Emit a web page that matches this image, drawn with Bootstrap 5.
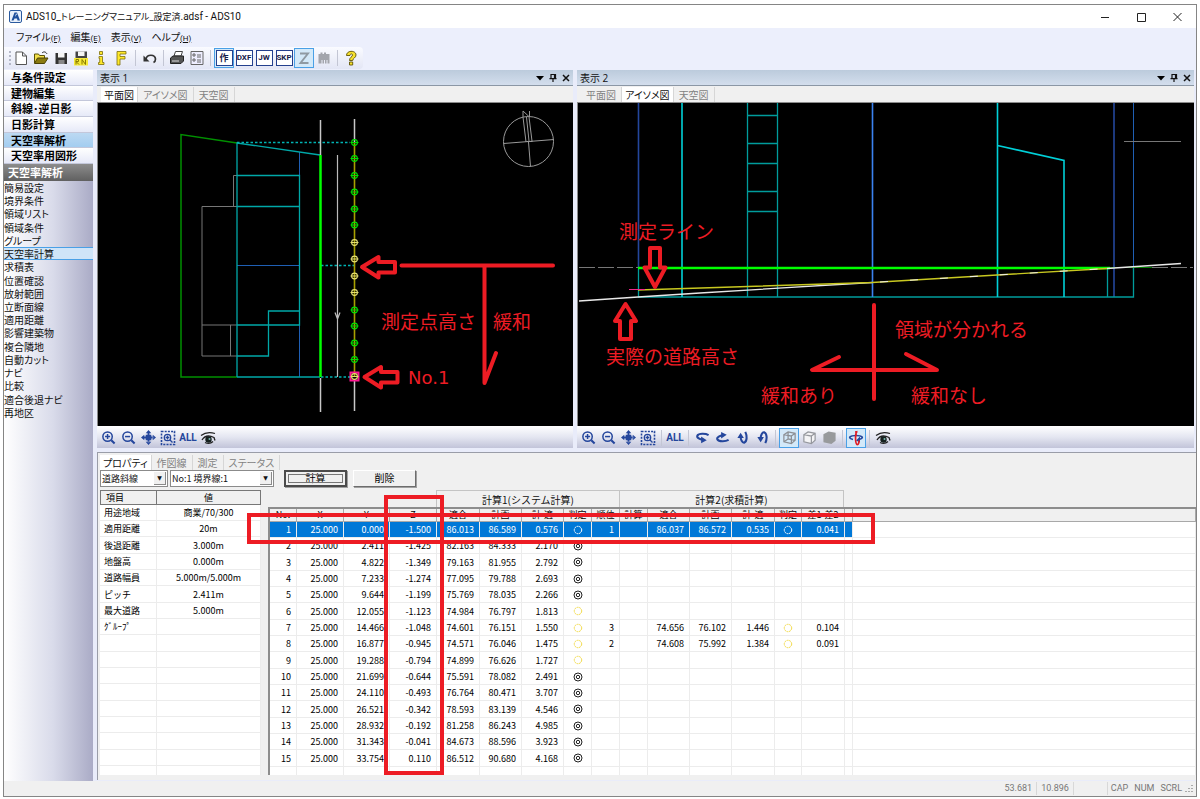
<!DOCTYPE html>
<html lang="ja">
<head>
<meta charset="utf-8">
<meta name="viewport" content="width=device-width, initial-scale=1">
<title>ADS10</title>
<link rel="stylesheet" href="https://cdn.jsdelivr.net/npm/bootstrap@5.3.0/dist/css/bootstrap.min.css">
<style>
  body { font: 10px/14px "Open Sans", "Noto Sans CJK JP", sans-serif; color: #111; background: #fff; padding: 4px 3px 2px; }
  svg { display: block; flex: none; }
  button { font-feature-settings: inherit; }
  .app-window { border: 1px solid #858585; min-height: calc(100vh - 6px); background: #eceffc; }
  .title-bar { height: 23px; background: #fff; padding-left: 5px; }
  .title-text { font: 10px/14px Roboto, "Noto Sans CJK JP", sans-serif; font-feature-settings: "palt"; }
  .title-text .jp { font-feature-settings: "palt"; }
  .win-buttons { gap: 22px; padding-right: 11px; }
  .win-buttons button, .pane-tools button { border: 0; background: none; padding: 0; }
  .menu-bar { height: 19px; padding-left: 12px; gap: 10px; font-feature-settings: "palt"; }
  .menu-bar a { color: #111; text-decoration: none; }
  .menu-bar small { font: 8px/14px Roboto, sans-serif; text-decoration: underline; }
  .grip { border-left: 2px dotted #b4b8c8; height: 14px; }
  .tool-row { height: 23px; }
  .tool-strip { height: 22px; width: fit-content; padding: 0 2px 0 1px; background: linear-gradient(#fafbff, #e3e6f5); border-radius: 0 4px 4px 0; }
  .tool-btn { width: 20px; height: 20px; padding: 0; border: 1px solid transparent; background: none; display: flex; align-items: center; justify-content: center; border-radius: 0; }
  .tool-btn.is-on { background: #d3e9f9; border-color: #4aa0e6; }
  .tool-sep { width: 1px; height: 16px; margin: 0 3px; background: #c3c6d4; flex: none; }
  .boxed { width: 17px; height: 16px; border: 1px solid #24408e; background: #fff; color: #16204a; font: bold 8px/14px Roboto, "Noto Sans CJK JP", sans-serif; display: flex; justify-content: center; flex: none; }
  .boxed-jp { font-size: 9px; }
  .side-bar { width: 89px; flex: none; background: linear-gradient(90deg, #fff, #d9dbea 55%, #aaabc6); }
  .side-groups { height: 94px; font-weight: 700; font-size: 11px; }
  .side-groups button { flex: 1; min-height: 0; padding: 0 0 0 7px; border: 0; border-bottom: 1px solid #c3c7da; background: linear-gradient(#fff, #e6e9f8); text-align: left; font-weight: 700; line-height: 1; color: #000; }
  .side-groups .is-on { background: linear-gradient(#bcd9f2, #a3cdf0); }
  .side-head { height: 17px; padding-left: 4px; background: linear-gradient(#8c8c8c, #606060); color: #fff; font-weight: 700; font-size: 11px; line-height: 17px; }
  .side-list { height: 238px; font-feature-settings: "palt"; }
  .side-list a { flex: 1; min-height: 0; color: #111; text-decoration: none; line-height: 12px; border: 1px solid transparent; border-width: 1px 0; }
  .side-list .is-on { background: #cfe4f8; border-color: #4aa0e6; }
  .work-area { padding-left: 4px; background: #e9ecfa; }
  .pane-row { gap: 4px; padding-right: 2px; }
  .pane { background: #f0f0f0; }
  .pane-one { flex: 476 1 0; }
  .pane-two { flex: 617 1 0; }
  .pane-head { height: 16px; padding: 0 3px; background: linear-gradient(#bccbdc, #d3deed); border-bottom: 1px solid #8b97a5; font-size: 10px; }
  .pane-tools { gap: 5px; }
  .view-tabs { height: 16px; padding: 1px 0 0 4px; font-feature-settings: "palt"; }
  .view-tabs button { border: 0; border-right: 1px solid #d6d6d6; background: none; color: #828282; padding: 0 5px; line-height: 14px; white-space: nowrap; }
  .view-tabs .is-on { background: #fff; color: #111; padding: 0 3px; }
  .view-canvas { background: #000; border: solid #8a8a8a; border-width: 1px 0 0 1px; height: 324px; }
  .view-canvas svg { width: 100%; height: 323px; }
  .mark-text { font: 19px "Noto Sans CJK JP", sans-serif; fill: #ed1c24; }
  .mark-latin { font: 18px "DejaVu Sans", sans-serif; }
  .view-tools { height: 22px; padding: 1px 1px 0; background: linear-gradient(#fff, #e4e6f1 50%, #c2c4d9); }
  .all-text { color: #24469c; font: bold 10px/14px Roboto, sans-serif; }
  .lower-panel { margin-top: 4px; background: #f0f0f0; border: 1px solid #9a9da8; border-width: 1px 0 0 1px; position: relative; height: 328px; }
  .lower-tabs { padding: 2px 0 0 2px; height: 17px; }
  .form-row { height: 20px; padding: 0 0 0 2px; gap: 2px; }
  .combo { position: relative; border: 1px solid #8b8b8b; height: 17px; background: #fff; }
  .combo select { appearance: none; border: 0; width: 100%; height: 15px; padding: 0 0 0 1px; background: none; font: 9px/14px "Noto Sans CJK JP", sans-serif; display: block; color: #111; }
  .combo::after { content: "▼"; font: 6px/12px "DejaVu Sans", sans-serif; position: absolute; right: 1px; top: 1px; width: 12px; height: 13px; background: #f0f0f0; border: 1px solid #8a8a8a; border-width: 0 1px 1px 0; text-align: center; pointer-events: none; }
  .combo-kind { width: 68px; }
  .combo-line { width: 104px; }
  .push { height: 17px; width: 63px; padding: 0; border: 1px solid; border-color: #fff #6d6d6d #6d6d6d #fff; background: #f0f0f0; font-size: 10px; line-height: 13px; box-shadow: 1px 1px 0 #a0a0a0; }
  .push.is-default { border: 2px solid #4b4b4b; outline: 1px solid #777; outline-offset: -5px; }
  .sheet { font: 9px/14px "Noto Sans CJK JP", sans-serif; border-collapse: separate; border-spacing: 0; table-layout: fixed; width: 100%; color: #000; }
  .sheet td, .sheet th { padding: 0 5px; height: 16px; line-height: 15px; border: 0 solid #ececec; border-width: 0 1px 1px 0; white-space: nowrap; text-align: right; font-weight: 400; }
  .sheet tbody tr:nth-child(3n) td { height: 17px; }
  .jp { font-size: 9px; }
  .grid-row { padding-left: 2px; }
  .prop-box { width: 161px; flex: none; height: 285px; overflow: hidden; background: #fff; }
  .prop-sheet .name-col { width: 57px; }
  .prop-sheet thead th { height: 15px; background: #f0f0f0; border: 1px solid #777; border-width: 1px 1px 1px 0; text-align: center; line-height: 12px; }
  .prop-sheet thead th:first-child { text-align: left; border-left-width: 1px; }
  .prop-sheet tbody th { text-align: left; padding-left: 4px; }
  .prop-sheet tbody tr:nth-child(3n) th { height: 17px; }
  .prop-sheet td { text-align: center; }
  .calc-box { margin-left: 7px; height: 285px; overflow: hidden; }
  .calc-heads { height: 17px; padding-left: 168px; }
  .calc-heads div { border: 1px solid #c4c4c4; border-width: 1px 0 0 1px; font: 10px/18px "Noto Sans CJK JP", sans-serif; text-align: center; }
  .calc-heads .head-one { width: 183px; }
  .calc-heads .head-two { width: 225px; border-right-width: 1px; }
  .calc-body { background: #fff; border-left: 2px solid #8d8d8d; border-top: 2px solid #8d8d8d; height: 268px; overflow: hidden; }
  .calc-sheet thead th { text-align: center; padding: 0; height: 13px; line-height: 12px; background: #f0f0f0; border-color: #a8a8a8; }
  .calc-sheet td.c { text-align: center; padding: 0; }
  .calc-sheet tr.sel td { background: #0078d7; color: #fff; }
  .calc-sheet tr.sel td:last-child { background: #fff; }
  .calc-sheet svg { margin: 0 auto; }
  .red-box { position: absolute; border: 4px solid #ed1c24; pointer-events: none; }
  .red-row { left: 149px; top: 60px; width: 628px; height: 31px; }
  .red-col { left: 286px; top: 42px; width: 60px; height: 280px; }
  .status-bar { height: 15px; background: #f0f0f0; color: #777; padding-right: 2px; font: 9px/13px Roboto, sans-serif; }
  .status-bar span { border-right: 1px solid #d8d8d8; padding: 0 4px; }
  .status-bar .status-gap { width: 34px; height: 13px; }
  .status-bar .status-key { border: 0; padding: 0 3px; }
</style>
</head>
<body>
<svg width="0" height="0" class="position-absolute" aria-hidden="true">
  <defs>
    <symbol id="zin" viewBox="0 0 16 16"><g fill="none" stroke="#24469c" stroke-width="1.600"><circle cx="7" cy="7" r="5"/><path d="M4.300 7h5.400M7 4.300v5.400"/><path d="M11 11l3.500 3.500" stroke-width="2.200"/></g></symbol>
    <symbol id="zout" viewBox="0 0 16 16"><g fill="none" stroke="#24469c" stroke-width="1.600"><circle cx="7" cy="7" r="5"/><path d="M4.300 7h5.400"/><path d="M11 11l3.500 3.500" stroke-width="2.200"/></g></symbol>
    <symbol id="pan" viewBox="0 0 16 16"><g fill="#24469c"><path d="M8 0l3 3.500H5zM8 16l3-3.500H5zM0 8l3.500-3v6zM16 8l-3.500-3v6zM5 5h6v6H5zM7 3h2v10H7zM3 7h10v2H3z"/></g></symbol>
    <symbol id="zfit" viewBox="0 0 16 16"><rect x="1.500" y="1.500" width="13" height="13" fill="none" stroke="#24469c" stroke-width="1.600" stroke-dasharray="2 1.200"/><g fill="none" stroke="#24469c" stroke-width="1.300"><circle cx="7.500" cy="7.500" r="3.200"/><path d="M5.600 7.500h3.800M7.500 5.600v3.800M10 10l2.500 2.500"/></g></symbol>
    <symbol id="eye" viewBox="0 0 16 16"><path d="M1 5.500C5 2.500 10 2 15 3.500" fill="none" stroke="#222" stroke-width="1.300"/><path d="M2 10c2.500-4 7-5 12-2.500l1 3M5 12.500c3 1.500 6 1 8-1" fill="none" stroke="#222" stroke-width="1.300"/><circle cx="8.500" cy="9.500" r="3.200" fill="#16211f"/><circle cx="9.500" cy="9" r="1" fill="#79b9b0"/></symbol>
    <symbol id="rot" viewBox="0 0 16 16"><path d="M1.500 5.500C5 3.500 12 3.500 13.500 6c1 2.500-3 4-6 4.500" fill="none" stroke="#24469c" stroke-width="2.200"/><path d="M9.500 7v7L3.500 11z" fill="#24469c"/></symbol>
    <symbol id="rotv" viewBox="0 0 16 16"><path d="M11 2c2 4 2 10-1 11.500C7.500 14 6 10 6 7" fill="none" stroke="#24469c" stroke-width="2.200"/><path d="M2.500 8.500h7L6 3z" fill="#24469c"/></symbol>
    <symbol id="tri" viewBox="0 0 8 6"><path d="M0 1h8L4 5.500z"/></symbol>
    <symbol id="pin" viewBox="0 0 8 8"><path d="M2 .5h4.500v4H2zM5.500.5v4M.5 4.700h7M4 5v3" fill="none" stroke="#111" stroke-width="1.200"/></symbol>
    <symbol id="cross" viewBox="0 0 8 8"><path d="M1 1l6 6M7 1L1 7" fill="none" stroke="#111" stroke-width="1.500"/></symbol>
    <symbol id="dot" viewBox="-5 -5 10 10"><g fill="none" stroke="currentColor" stroke-width="1.100"><circle r="2.900"/><path d="M-4 0h8"/></g></symbol>
  </defs>
</svg>

<div class="app-window d-flex flex-column">
  <header>
    <div class="title-bar d-flex align-items-center">
      <svg width="13" height="13" viewBox="0 0 13 13"><rect x=".5" y=".5" width="12" height="12" rx="1.500" fill="#e8f0fb" stroke="#2a5a9f"/><path d="M2.500 10.500L5.500 2.500H8l3 8H8.500L8 8.500H5.500l-1 2z" fill="#1d4f9c"/><path d="M6 7L8 4l-1-.500z" fill="#fff"/></svg>
      <span class="title-text ms-1">ADS10_<span class="jp">トレーニングマニュアル_設定済</span>.adsf - ADS10</span>
      <div class="win-buttons d-flex ms-auto">
        <button type="button" aria-label="最小化"><svg width="14" height="14"><path d="M2 7.500h8" stroke="#222"/></svg></button>
        <button type="button" aria-label="最大化"><svg width="14" height="14"><path d="M2.500 3.500h8v8h-8z" fill="none" stroke="#222"/></svg></button>
        <button type="button" aria-label="閉じる"><svg width="14" height="14"><path d="M2.500 3l8 8m0-8l-8 8" stroke="#222"/></svg></button>
      </div>
    </div>
    <nav class="menu-bar d-flex align-items-center">
      <a href="#">ファイル<small>(F)</small></a><a href="#">編集<small>(E)</small></a><a href="#">表示<small>(V)</small></a><a href="#">ヘルプ<small>(H)</small></a>
    </nav>
    <div class="tool-row">
      <div class="tool-strip d-flex align-items-center">
        <span class="grip ms-1"></span>
        <button class="tool-btn" aria-label="新規"><svg width="16" height="16" viewBox="0 0 16 16"><path d="M3 2h6.500l4 4v8.500H3zM9.500 2v4h4" fill="#fff" stroke="#555"/></svg></button>
        <button class="tool-btn" aria-label="開く"><svg width="16" height="16" viewBox="0 0 16 16"><path d="M1.500 13V4h4l1 1.500h5V8" fill="#f3e04a" stroke="#5b5207"/><path d="M1.500 13.500L4.500 8H15l-3.500 5.500z" fill="#8a7a10" stroke="#4b4306"/><path d="M9 3c2-2 4-1 5 1" fill="none" stroke="#222"/></svg></button>
        <button class="tool-btn" aria-label="保存"><svg width="16" height="16" viewBox="0 0 16 16"><path d="M2.500 3H14v11H2.500z" fill="#333"/><path d="M5 3h6.500v4.500H5z" fill="#f4f4f4"/><path d="M5.500 10h6v4h-6z" fill="#888"/></svg></button>
        <button class="tool-btn" aria-label="名前を付けて保存"><svg width="16" height="16" viewBox="0 0 16 16"><path d="M2.500 1.500H14V9H2.500z" fill="#444"/><path d="M5 1.500h6.500V6H5z" fill="#f4f4f4"/><rect x="1" y="8" width="14" height="7.500" fill="#f5e93a"/><path d="M3 14.500V9.500h2.500v2H3l3 3M9 14.500v-5l3.500 5v-5" fill="none" stroke="#8a7d00"/></svg></button>
        <button class="tool-btn" aria-label="情報"><svg width="16" height="16" viewBox="0 0 16 16"><path d="M6.500 1.500h3v3h-3zM6 6.500h3.500v6H11v2H5.500v-2h1.200v-4H6z" fill="#ffe92b" stroke="#7b6d0c" stroke-width=".8"/></svg></button>
        <button class="tool-btn" aria-label="書式"><svg width="16" height="16" viewBox="0 0 16 16"><path d="M4 1.500h9V4H7v2.500h5V9H7v6H4z" fill="#ffe92b" stroke="#7b6d0c" stroke-width=".8"/></svg></button>
        <span class="tool-sep mx-1"></span>
        <button class="tool-btn" aria-label="元に戻す"><svg width="16" height="16" viewBox="0 0 16 16"><path d="M4 9c1-5 9-5 9.500 0 0 2-1 3-2 3.500" fill="none" stroke="#333" stroke-width="1.700"/><path d="M1.500 5.500v6H7.500z" fill="#333"/></svg></button>
        <span class="tool-sep"></span>
        <button class="tool-btn" aria-label="印刷"><svg width="16" height="16" viewBox="0 0 16 16"><path d="M5 6l1.500-4.500h7L12 6z" fill="#fff" stroke="#444"/><path d="M1.500 8L4 6h10.500v5L12 13.500H1.500z" fill="#555" stroke="#222"/><path d="M3 11h7" stroke="#ddd"/></svg></button>
        <button class="tool-btn" aria-label="設定一覧"><svg width="16" height="16" viewBox="0 0 16 16"><path d="M2 1.500h12v13H2z" fill="#eef" stroke="#666"/><path d="M4 4h2v2H4zM4 9h2v2H4zM8 5h4M8 7h4M8 10h4M8 12h4" fill="none" stroke="#666"/></svg></button>
        <span class="tool-sep"></span>
        <button class="tool-btn is-on"><span class="boxed boxed-jp">作</span></button>
        <button class="tool-btn"><span class="boxed">DXF</span></button>
        <button class="tool-btn"><span class="boxed">JW</span></button>
        <button class="tool-btn"><span class="boxed">SKP</span></button>
        <button class="tool-btn is-on" aria-label="Z"><svg width="16" height="16" viewBox="0 0 16 16"><path d="M4 3.500h8L4.500 13H12.500" fill="none" stroke="#8f9aa3" stroke-width="1.900"/></svg></button>
        <button class="tool-btn" aria-label="建物"><svg width="16" height="16" viewBox="0 0 16 16"><path d="M2.500 13.500V4h2V2.500h2V4h1.500V2.500h2V4h3.500v9.500h-2V10h-1v3.500h-1.500V10h-1v3.500H6.500V10h-1v3.500z" fill="#a3a5ac"/></svg></button>
        <span class="tool-sep"></span>
        <button class="tool-btn" aria-label="ヘルプ"><svg width="16" height="16" viewBox="0 0 16 16"><path d="M3.500 5.500C3.500 0 13 0 13 5c0 3-3.300 3-3.300 5.500H6.500C6.500 7 9.500 7 9.500 5 9.500 3.500 7 3.500 7 5.500zM6.500 12h3.200v3H6.500z" fill="#f7e12e" stroke="#5f5406" stroke-width=".9"/></svg></button>
      </div>
    </div>
  </header>

  <div class="d-flex flex-grow-1">
    <aside class="side-bar">
      <div class="side-groups d-flex flex-column">
        <button>与条件設定</button><button>建物編集</button><button>斜線･逆日影</button><button>日影計算</button><button class="is-on">天空率解析</button><button>天空率用図形</button>
      </div>
      <div class="side-head">天空率解析</div>
      <nav class="side-list d-flex flex-column">
        <a href="#">簡易設定</a><a href="#">境界条件</a><a href="#">領域リスト</a><a href="#">領域条件</a><a href="#">グループ</a><a href="#" class="is-on">天空率計算</a><a href="#">求積表</a><a href="#">位置確認</a><a href="#">放射範囲</a><a href="#">立断面線</a><a href="#">適用距離</a><a href="#">影響建築物</a><a href="#">複合隣地</a><a href="#">自動カット</a><a href="#">ナビ</a><a href="#">比較</a><a href="#">適合後退ナビ</a><a href="#">再地区</a>
      </nav>
    </aside>

    <main class="work-area flex-grow-1">
      <div class="pane-row d-flex">
        <section class="pane pane-one">
          <div class="pane-head d-flex align-items-center justify-content-between">表示 1
            <span class="pane-tools d-flex"><button aria-label="メニュー"><svg width="8" height="8"><use href="#tri"/></svg></button><button aria-label="固定"><svg width="8" height="8"><use href="#pin"/></svg></button><button aria-label="閉じる"><svg width="8" height="8"><use href="#cross"/></svg></button></span>
          </div>
          <div class="view-tabs d-flex"><button class="is-on">平面図</button><button>アイソメ図</button><button>天空図</button></div>
          <div class="view-canvas">
            <svg viewBox="98 103 473 323" preserveAspectRatio="xMinYMid meet">
              <g fill="none">
                <path d="M202 356V206.500H237M233.500 206.500V175.500H237M202 325H237M230.500 325V356M202 356H237" stroke="#777"/>
                <path d="M237 143L181 134.500V377H237" stroke="#009000" stroke-width="1.500"/>
                <path d="M299.500 152V175M237 265.500H299.500M299.500 325V377" stroke="#1f5fb4"/>
                <path d="M237 377V143L320 155M237 175.500H299.500V325H237M237 206.500H299.500M237 356H268.500V311H299.500M237 377H320" stroke="#00a8a8" stroke-width="1.300"/>
                <path d="M237 142.500H350M321 265.500H354M321 377H350" stroke="#00b4b4" stroke-width="1.300" stroke-dasharray="2.500 2"/>
                <path d="M320.500 120V155M320.500 378V412M354.500 119V142M354.500 381V411" stroke="#c8c8c8" stroke-width="1.500"/>
                <path d="M337.500 155V377M335 312.500L337.500 319L340 312.500M337.500 315V320" stroke="#bbb" stroke-width="1.200"/>
                <path d="M320.500 155V377" stroke="#0f0" stroke-width="2.500"/>
                <path d="M354.500 142V377" stroke="#a8a000" stroke-width="1.600"/>
                <rect x="350.500" y="372.500" width="8" height="8" stroke="#ff1493" stroke-width="2"/>
                <g stroke="#999"><circle cx="528.500" cy="141.500" r="25"/><path d="M503.500 143.500L554 139.500M528.500 142L530.500 166.500M526 142L523 117M529 141L526.500 117M532 141L529 117M526.500 141.500h6M523 117V111L529.500 117V111"/></g>
              </g>
              <g id="points"></g>
              <g fill="none" stroke="#ed1c24" stroke-width="4" stroke-linejoin="round" stroke-linecap="round">
                <path d="M362 267L378.500 257V262H395V272.500H378.500V277.500ZM364.500 377L381 367V372H397.500V382.500H381V387.500Z"/>
                <path d="M401.500 265.500H553M484.500 265.500V383L496 353"/>
              </g>
              <g class="mark-text"><text x="381" y="329">測定点高さ</text><text x="493" y="329">緩和</text><text class="mark-latin" x="408" y="384">No.1</text></g>
            </svg>
          </div>
          <div class="view-tools d-flex align-items-center">
            <button class="tool-btn" aria-label="拡大"><svg width="15" height="15"><use href="#zin"/></svg></button><button class="tool-btn" aria-label="縮小"><svg width="15" height="15"><use href="#zout"/></svg></button><button class="tool-btn" aria-label="移動"><svg width="15" height="15"><use href="#pan"/></svg></button><button class="tool-btn" aria-label="範囲"><svg width="16" height="16"><use href="#zfit"/></svg></button><button class="tool-btn all-text">ALL</button><button class="tool-btn" aria-label="表示"><svg width="16" height="16"><use href="#eye"/></svg></button>
          </div>
        </section>

        <section class="pane pane-two">
          <div class="pane-head d-flex align-items-center justify-content-between">表示 2
            <span class="pane-tools d-flex"><button aria-label="メニュー"><svg width="8" height="8"><use href="#tri"/></svg></button><button aria-label="固定"><svg width="8" height="8"><use href="#pin"/></svg></button><button aria-label="閉じる"><svg width="8" height="8"><use href="#cross"/></svg></button></span>
          </div>
          <div class="view-tabs d-flex"><button>平面図</button><button class="is-on">アイソメ図</button><button>天空図</button></div>
          <div class="view-canvas">
            <svg viewBox="578 103 616 323" preserveAspectRatio="xMinYMid meet">
              <g fill="none">
                <path d="M638.500 103V268M1114 103V297" stroke="#24469c" stroke-width="1.600"/>
                <path d="M1133.500 103V268" stroke="#1f5fb4"/>
                <path d="M747.500 103V297M777.500 103V297M747.500 115.500H777.500M747.500 143.500H777.500M747.500 163.500H777.500M747.500 191.500H777.500M747.500 211.500H777.500M638.500 268V297H1133.500V268M1107.500 268V297" stroke="#009c9c" stroke-width="1.300"/>
                <path d="M682 103V297M997.500 103V297M997.500 145.500L1064 160.500V297" stroke="#00d0d8" stroke-width="1.600"/>
                <path d="M872.500 103V297" stroke="#3b82f0" stroke-width="1.600"/>
                <path d="M1124 141.500H1181" stroke="#777"/>
                <path d="M579 267.500H638M1152 267.500H1193" stroke="#777" stroke-dasharray="16 3"/>
                <path d="M1107 267.500H1152" stroke="#008000"/>
                <path d="M638 268H1110" stroke="#0f0" stroke-width="2.500"/>
                <path d="M579 301L638 297L700 293L872 282.500M1107 268.500L1181 263.500" stroke="#e8e8e8" stroke-width="1.300"/>
                <path d="M638 290L872 282.500L1107 268.500" stroke="#c8c820" stroke-width="1.400"/>
                <path d="M880 282L1107 268.500" stroke="#eee" stroke-dasharray="8 22"/>
                <path d="M629 289.500H645" stroke="#f0288a"/>
              </g>
              <g fill="none" stroke="#ed1c24" stroke-width="4" stroke-linejoin="round" stroke-linecap="round">
                <path d="M650 248H660V267.500H665.500L655 287L644.500 267.500H650ZM625.500 304L636 321H631V339H620V321H615Z"/>
                <path d="M874 305V399M839 357L812 370H937L906 354"/>
              </g>
              <g class="mark-text"><text x="619" y="239">測定ライン</text><text x="606" y="364">実際の道路高さ</text><text x="895" y="337">領域が分かれる</text><text x="761" y="403">緩和あり</text><text x="911" y="403">緩和なし</text></g>
            </svg>
          </div>
          <div class="view-tools d-flex align-items-center">
            <button class="tool-btn" aria-label="拡大"><svg width="15" height="15"><use href="#zin"/></svg></button><button class="tool-btn" aria-label="縮小"><svg width="15" height="15"><use href="#zout"/></svg></button><button class="tool-btn" aria-label="移動"><svg width="15" height="15"><use href="#pan"/></svg></button><button class="tool-btn" aria-label="範囲"><svg width="16" height="16"><use href="#zfit"/></svg></button>
            <span class="tool-sep"></span><button class="tool-btn all-text">ALL</button><span class="tool-sep"></span>
            <button class="tool-btn" aria-label="左回転"><svg width="15" height="15" viewBox="0 0 16 16"><use href="#rot" width="16" height="16" transform="matrix(1 0 0 -1 0 16) rotate(180 8 8)"/></svg></button><button class="tool-btn" aria-label="右回転"><svg width="15" height="15" viewBox="0 0 16 16"><use href="#rot" width="16" height="16" transform="rotate(180 8 8)"/></svg></button><button class="tool-btn" aria-label="下回転"><svg width="15" height="15"><use href="#rotv"/></svg></button><button class="tool-btn" aria-label="上回転"><svg width="15" height="15" viewBox="0 0 16 16"><use href="#rotv" width="16" height="16" transform="matrix(1 0 0 -1 0 16)"/></svg></button>
            <span class="tool-sep"></span>
            <button class="tool-btn is-on" aria-label="ワイヤー"><svg width="15" height="15" viewBox="0 0 16 16"><path d="M2 5l4.500-3L14 3.500v7.500L10 14.500 2 12.500zM2 5l8 1.500v8M10 6.500l4-3M6.500 2v7.500l7.500 1.500M6.500 9.500L2 12.500" fill="none" stroke="#8c8f94" stroke-width="1.300"/></svg></button>
            <button class="tool-btn" aria-label="隠線"><svg width="15" height="15" viewBox="0 0 16 16"><path d="M2 5l4.500-3L14 3.500v7.500L10 14.500 2 12.500zM2 5l8 1.500v8M10 6.500l4-3" fill="#f4f4f6" stroke="#96989e" stroke-width="1.300"/></svg></button>
            <button class="tool-btn" aria-label="塗り"><svg width="15" height="15" viewBox="0 0 16 16"><path d="M1.500 4.500L7 1.500 14.500 3v8.500L10 15l-8.500-2z" fill="#989a9c"/></svg></button>
            <span class="tool-sep"></span>
            <button class="tool-btn is-on" aria-label="自由回転"><svg width="16" height="16" viewBox="0 0 16 16"><path d="M5 9.500C-1 8 2 5.500 8 5.500s9 2.500 3 4" fill="none" stroke="#24469c" stroke-width="1.700"/><path d="M12 6.500v6l-4-2z" fill="#24469c"/><path d="M9.500 1.500C7 2 7 13 9 14.500c1.500.500 2-2 2-4M8 1v5" fill="none" stroke="#e21b23" stroke-width="1.700"/></svg></button>
            <span class="tool-sep"></span>
            <button class="tool-btn" aria-label="表示"><svg width="16" height="16"><use href="#eye"/></svg></button>
          </div>
        </section>
      </div>

      <section class="lower-panel">
        <div class="view-tabs lower-tabs d-flex"><button class="is-on">プロパティ</button><button>作図線</button><button>測定</button><button>ステータス</button></div>
        <div class="form-row d-flex">
          <div class="combo combo-kind"><select aria-label="種別"><option>道路斜線</option></select></div>
          <div class="combo combo-line"><select aria-label="境界線"><option>No:1 境界線:1</option></select></div>
          <button class="push is-default ms-2">計算</button><button class="push ms-1">削除</button>
        </div>
        <div class="grid-row d-flex">
          <div class="prop-box">
            <table class="sheet prop-sheet">
              <colgroup><col class="name-col"><col></colgroup>
              <thead><tr><th>項目</th><th>値</th></tr></thead>
              <tbody id="props"></tbody>
            </table>
          </div>
          <div class="calc-box flex-grow-1">
            <div class="calc-heads d-flex"><div class="head-one">計算1(システム計算)</div><div class="head-two">計算2(求積計算)</div></div>
            <div class="calc-body">
              <table class="sheet calc-sheet">
                <colgroup id="cols"></colgroup>
                <thead><tr id="heads"></tr></thead>
                <tbody id="rows"></tbody>
              </table>
            </div>
          </div>
        </div>
        <div class="red-box red-row"></div>
        <div class="red-box red-col"></div>
      </section>
    </main>
  </div>
  <footer class="status-bar d-flex justify-content-end align-items-center"><span>53.681</span><span>10.896</span><span class="status-gap"></span><span class="status-key">CAP</span><span class="status-key">NUM</span><span class="status-key">SCRL</span>
    <svg width="9" height="9"><path d="M7 1v1M7 4v1M4 4v1M7 7v1M4 7v1M1 7v1" stroke="#aaa" stroke-width="2"/></svg></footer>
</div>

<script>
  const byId = id => document.getElementById(id);
  // Property list
  const props = [["用途地域", "商業/70/300"], ["適用距離", "20m"], ["後退距離", "3.000m"], ["地盤高", "0.000m"], ["道路幅員", "5.000m/5.000m"], ["ピッチ", "2.411m"], ["最大道路", "5.000m"], ["ｸﾞﾙｰﾌﾟ", ""]];
  while (props.length < 17) props.push(["", ""]);
  byId("props").innerHTML = props.map(p => `<tr><th>${p[0]}</th><td>${p[1]}</td></tr>`).join("");

  // Result sheet: y, z, fit, plan, difference, verdict (d = double ring, o = ring)
  const widths = [27, 47, 46, 47, 43, 42, 42, 28, 28, 28, 42, 42, 43, 27, 43, 8];
  byId("cols").innerHTML = widths.map(w => `<col style="width:${w}px">`).join("") + "<col>";
  byId("heads").innerHTML = ["No.", "X", "Y", "Z", "適合", "計画", "計-適", "判定", "順位", "計算", "適合", "計画", "計-適", "判定", "差1-差2", "", ""].map(h => `<th>${h}</th>`).join("");
  const ring = c => `<svg width="10" height="10"><circle cx="5" cy="5" r="3.700" fill="none" stroke="${c}" stroke-dasharray="2 .6"/></svg>`;
  const dbl = `<svg width="10" height="10"><g fill="none" stroke="#222"><circle cx="5" cy="5" r="4"/><circle cx="5" cy="5" r="1.700"/></g></svg>`;
  const data = `0.000 -1.500 86.013 86.589 0.576 o 1 86.037 86.572 0.535 0.041
2.411 -1.425 82.163 84.333 2.170 d
4.822 -1.349 79.163 81.955 2.792 d
7.233 -1.274 77.095 79.788 2.693 d
9.644 -1.199 75.769 78.035 2.266 d
12.055 -1.123 74.984 76.797 1.813 o
14.466 -1.048 74.601 76.151 1.550 o 3 74.656 76.102 1.446 0.104
16.877 -0.945 74.571 76.046 1.475 o 2 74.608 75.992 1.384 0.091
19.288 -0.794 74.899 76.626 1.727 o
21.699 -0.644 75.591 78.082 2.491 d
24.110 -0.493 76.764 80.471 3.707 d
26.521 -0.342 78.593 83.139 4.546 d
28.932 -0.192 81.258 86.243 4.985 d
31.343 -0.041 84.673 88.596 3.923 d
33.754 0.110 86.512 90.680 4.168 d`.split("\n").map(r => r.split(" "));
  byId("rows").innerHTML = data.map((r, i) => {
    const c = i ? "#f3dc4c" : "#fff", t = v => `<td>${v || ""}</td>`;
    return `<tr class="${i ? "" : "sel"}">` + t(i + 1) + t("25.000") + r.slice(0, 5).map(t).join("") +
      `<td class="c">${r[5] === "d" ? dbl : ring(c)}</td>` + t(r[6]) + t("") + t(r[7]) + t(r[8]) + t(r[9]) +
      `<td class="c">${r[6] ? ring(c) : ""}</td>` + t(r[10]) + "<td></td><td></td></tr>";
  }).join("") + "<tr>" + "<td></td>".repeat(17) + "</tr>";

  // Measuring points on the plan
  const pts = [142.5, 158.5, 175.5, 192, 209, 225, 242.5, 259, 276, 292.5, 310, 326, 343, 359.5, 376.5];
  byId("points").innerHTML = pts.map((y, i) => `<use href="#dot" x="349.500" y="${y - 5}" width="10" height="10" color="${(i > 5 && i < 10) || i === 14 ? "#e6e070" : "#00e000"}"/>`).join("");
</script>
<script src="https://cdn.jsdelivr.net/npm/bootstrap@5.3.0/dist/js/bootstrap.bundle.min.js"></script>
</body>
</html>
